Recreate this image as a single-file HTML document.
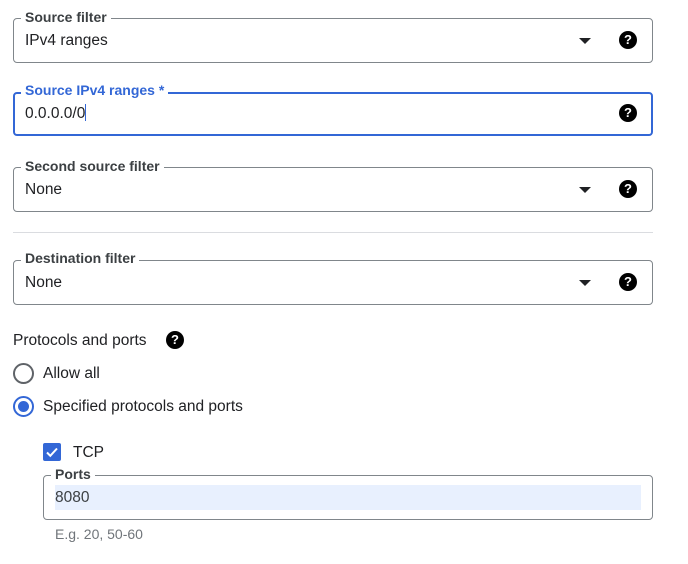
<!DOCTYPE html><html><head><style>
body{margin:0;width:688px;height:564px;background:#fff;font-family:"Liberation Sans",Arial,sans-serif;color:#202124;position:relative;overflow:hidden}
.a{position:absolute}
.box{position:absolute;left:13px;width:638px;height:43px;border:1px solid #80868b;border-radius:4px}
.lbl{position:absolute;left:21px;background:#fff;padding:0 4px;font-size:14px;font-weight:bold;color:#3c4043;line-height:16px}
.val{position:absolute;left:25px;font-size:15.5px;line-height:18px}
.arr{position:absolute;left:579px;width:0;height:0;border-left:6px solid transparent;border-right:6px solid transparent;border-top:6px solid #202124}
.q{position:absolute;width:18px;height:18px;border-radius:50%;background:#000;color:#fff;font-size:13px;font-weight:bold;text-align:center;line-height:18px}
</style></head><body>
<div class="box" style="top:18px"></div>
<div class="lbl" style="top:9px">Source filter</div>
<div class="val" style="top:32px">IPv4 ranges</div>
<div class="arr" style="top:38px"></div>
<div class="q" style="left:619px;top:31px">?</div>

<div class="box" style="top:92px;left:13px;width:636px;height:40px;border:2px solid #3367d6"></div>
<div class="lbl" style="top:82px;color:#3367d6">Source IPv4 ranges *</div>
<div class="val" style="top:104px">0.0.0.0/0<span style="display:inline-block;width:1px;height:17px;background:#3367d6;vertical-align:-3px"></span></div>
<div class="q" style="left:619px;top:104px">?</div>

<div class="box" style="top:167px"></div>
<div class="lbl" style="top:158px">Second source filter</div>
<div class="val" style="top:181px">None</div>
<div class="arr" style="top:187px"></div>
<div class="q" style="left:619px;top:180px">?</div>

<div class="a" style="left:13px;top:232px;width:640px;height:1px;background:#dadce0"></div>

<div class="box" style="top:260px"></div>
<div class="lbl" style="top:250px">Destination filter</div>
<div class="val" style="top:274px">None</div>
<div class="arr" style="top:280px"></div>
<div class="q" style="left:619px;top:273px">?</div>

<div class="a" style="left:13px;top:332px;font-size:15.5px">Protocols and ports</div>
<div class="q" style="left:166px;top:331px">?</div>

<div class="a" style="left:13px;top:363px;width:17px;height:17px;border:2px solid #5f6368;border-radius:50%"></div>
<div class="a" style="left:43px;top:365px;font-size:15.5px">Allow all</div>
<div class="a" style="left:13px;top:396px;width:17px;height:17px;border:2px solid #3367d6;border-radius:50%"></div>
<div class="a" style="left:18px;top:401px;width:11px;height:11px;background:#3367d6;border-radius:50%"></div>
<div class="a" style="left:43px;top:398px;font-size:15.5px">Specified protocols and ports</div>

<div class="a" style="left:43px;top:443px;width:18px;height:18px;background:#3367d6;border-radius:2px">
<svg width="18" height="18" viewBox="0 0 18 18"><path d="M4 9.5l3.3 3.3L14 5.5" stroke="#fff" stroke-width="2" fill="none"/></svg></div>
<div class="a" style="left:73px;top:444px;font-size:15.5px">TCP</div>

<div class="a" style="left:43px;top:475px;width:608px;height:43px;border:1px solid #80868b;border-radius:4px"></div>
<div class="lbl" style="left:51px;top:466px">Ports</div>
<div class="a" style="left:55px;top:485px;width:586px;height:25px;background:#e8f0fe"></div>
<div class="a" style="left:55px;top:489px;font-size:15.5px;color:#3c4043">8080</div>
<div class="a" style="left:55px;top:526px;font-size:14px;color:#70757a">E.g. 20, 50-60</div>
</body></html>
